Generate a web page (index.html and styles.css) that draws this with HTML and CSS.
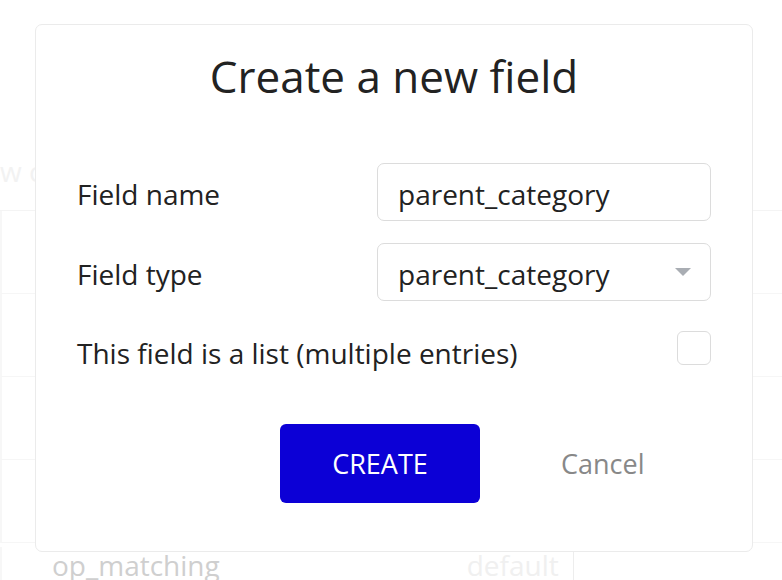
FILE: index.html
```html
<!DOCTYPE html>
<html lang="en">
<head>
<meta charset="utf-8">
<title>Create a new field</title>
<link rel="stylesheet" href="styles.css">
</head>
<body>
<div class="page">
  <div class="bg-head"><span class="bg-ghost">w c</span></div>
  <div class="bg-row"></div>
  <div class="bg-row"></div>
  <div class="bg-row"></div>
  <div class="bg-row"></div>
  <div class="bg-foot">
    <span class="bg-name">op_matching</span>
    <span class="bg-default">default</span>
  </div>

  <div class="modal">
    <h1 class="title">Create a new field</h1>
    <div class="form">
      <label class="label">Field name</label>
      <div class="input">parent_category</div>
      <label class="label">Field type</label>
      <div class="input select">parent_category
        <svg class="caret" width="16" height="9" viewBox="0 0 16 9"><path d="M0 0h16l-8 8z" fill="#a9adb3"/></svg>
      </div>
      <label class="label label-list">This field is a list (multiple entries)</label>
      <div class="check-cell"><span class="checkbox"></span></div>
    </div>
    <div class="actions">
      <button class="btn-create">CREATE</button>
      <button class="btn-cancel">Cancel</button>
    </div>
  </div>
</div>
</body>
</html>
```
FILE: styles.css
```css
* { box-sizing: border-box; }
html, body { margin: 0; padding: 0; background: #fff; }
body { font-family: "Open Sans", "Liberation Sans", sans-serif; color: #222; }
.page { position: relative; width: 782px; height: 580px; overflow: hidden; }

/* faint background page */
.bg-head { height: 211px; border-bottom: 1px solid #f4f4f4; width: 782px; padding-top: 152px; }
.bg-ghost { font-size: 28px; color: #f2f2f2; }
.bg-row { height: 83px; border-bottom: 1px solid #f6f6f6; border-left: 2px solid #f7f7f7; }
.bg-foot { display: flex; align-items: center; height: 36px; margin-top: 4px; border-left: 2px solid #f7f7f7; }
.bg-name { font-size: 28px; color: #cfcfcf; margin-left: 50px; }
.bg-default { font-size: 28px; color: #f0f0f0; margin-left: 247px; padding-right: 14px; border-right: 1px solid #ededed; }

/* modal */
.modal {
  position: absolute; left: 35px; top: 24px; width: 718px; height: 528px;
  background: #fff; border: 1px solid #ebebeb; border-radius: 7px;
  padding: 0 41px;
  display: flex; flex-direction: column;
}
.title {
  margin: 21px 0 0; font-size: 44px; font-weight: 400; line-height: 60px;
  text-align: center; color: #222;
}
.form {
  margin-top: 57px;
  display: grid; grid-template-columns: 300px 334px;
  row-gap: 22px; align-items: center;
}
.label { font-size: 28px; color: #222; padding-top: 4px; white-space: nowrap; }
.label-list { align-self: start; padding-top: 11px; }
.input {
  height: 58px; border: 1.5px solid #dcdcdc; border-radius: 7px;
  padding: 4px 20px 0; font-size: 28px; color: #222;
  display: flex; align-items: center; justify-content: space-between;
}
.caret { margin-right: -1px; margin-top: -4px; }
.check-cell { display: flex; justify-content: flex-end; align-self: start; padding-top: 8px; }
.checkbox { width: 34px; height: 34px; border: 1.5px solid #dcdcdc; border-radius: 6px; }

.actions { display: flex; align-items: center; margin-top: 52px; padding-left: 203px; }
.btn-create {
  width: 200px; height: 79px; border: none; border-radius: 6px;
  background: #0c00d6; color: #fff; font-family: inherit; font-size: 27px;
}
.btn-cancel {
  border: none; background: none; color: #888; font-family: inherit; font-size: 27px;
  margin-left: 81px; padding: 0;
}
```
